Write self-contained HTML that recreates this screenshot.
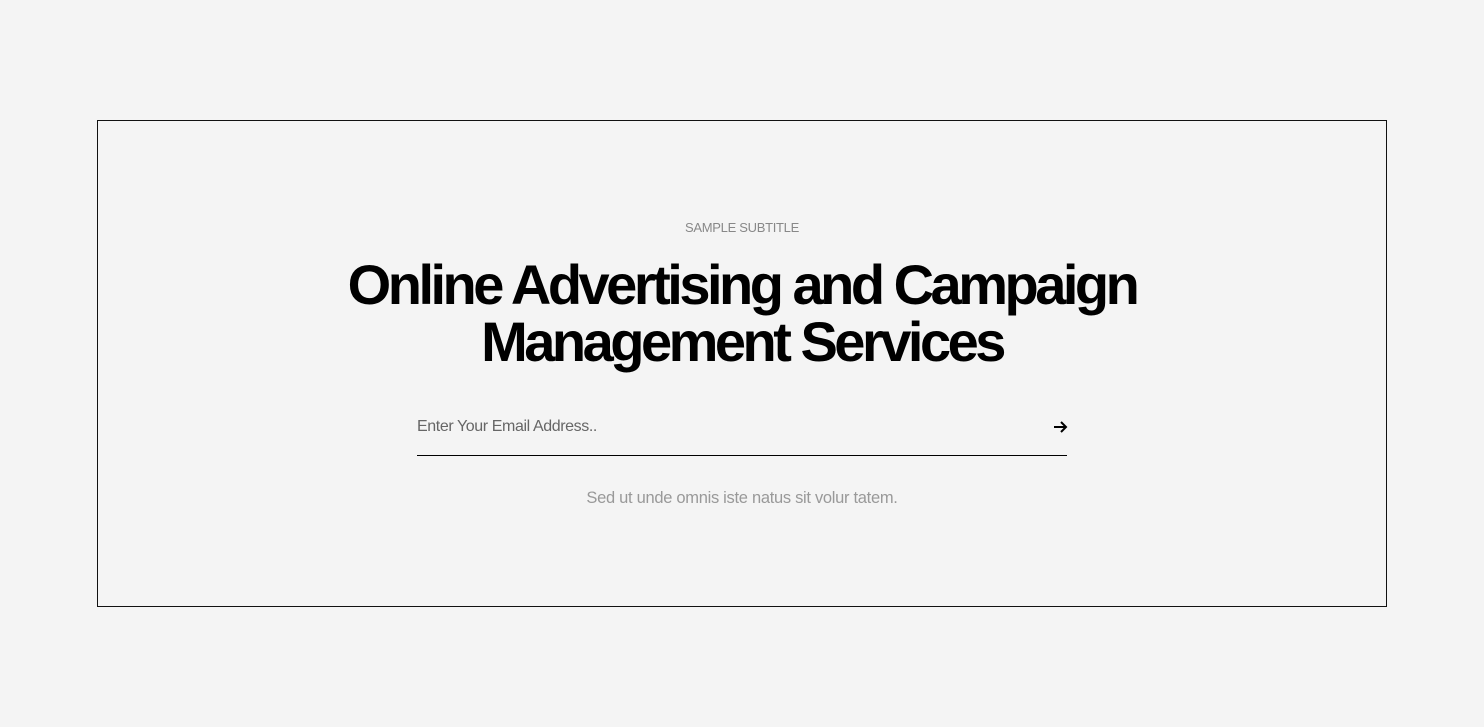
<!DOCTYPE html>
<html><head><style>
body{margin:0;background:#f4f4f4;width:1484px;height:727px;font-family:"Liberation Sans",sans-serif;position:relative;overflow:hidden}
.box{position:absolute;left:97px;top:120px;width:1288px;height:485px;border:1px solid #111}
.sub{position:absolute;top:220px;left:0;width:1484px;text-align:center;font-size:13px;color:#888;letter-spacing:-0.3px}
h1{position:absolute;top:256px;left:0;width:1484px;margin:0;text-align:center;font-size:56px;line-height:57px;font-weight:bold;color:#000;letter-spacing:-3.5px}
.ph{position:absolute;left:417px;top:418px;font-size:16px;color:#666;letter-spacing:-0.4px}
.line{position:absolute;left:417px;top:455px;width:650px;height:1px;background:#000}
.arrow{position:absolute;left:1051px;top:418px}
.foot{position:absolute;top:489px;left:0;width:1484px;text-align:center;font-size:16.5px;color:#999;letter-spacing:-0.3px}
</style></head><body>
<div class="box"></div>
<div class="sub">SAMPLE SUBTITLE</div>
<h1>Online Advertising and Campaign<br>Management Services</h1>
<div class="ph">Enter Your Email Address..</div>
<svg class="arrow" width="18" height="18" viewBox="0 0 18 18"><path d="M3 9H15M10 4L15 9L10 14" stroke="#000" stroke-width="2" fill="none"/></svg>
<div class="line"></div>
<div class="foot">Sed ut unde omnis iste natus sit volur tatem.</div>
</body></html>
